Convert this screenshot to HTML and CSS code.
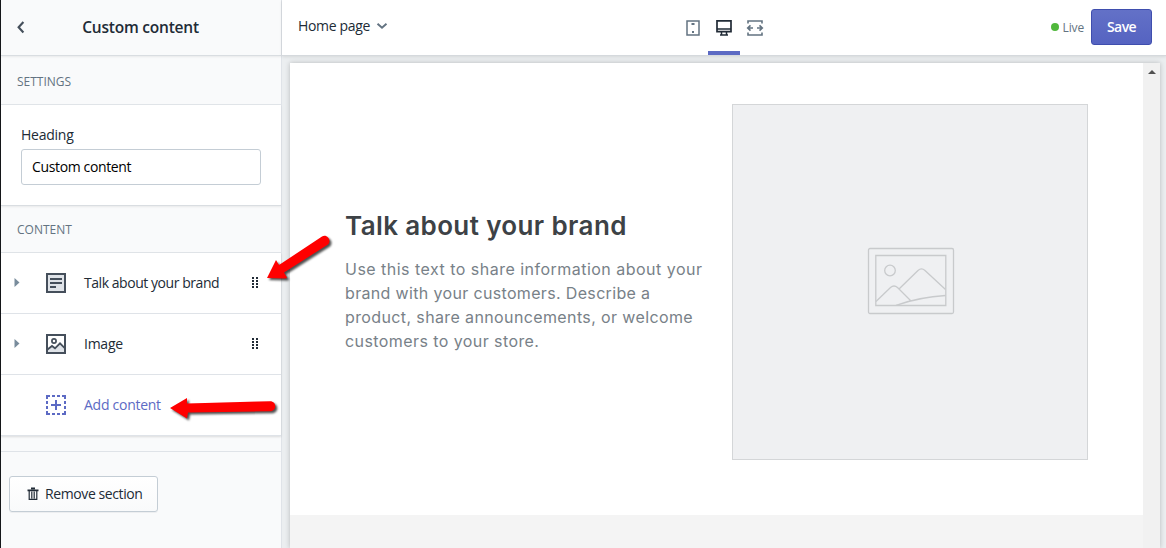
FILE: index.html
```html
<!DOCTYPE html>
<html lang="en">
<head>
<meta charset="utf-8">
<title>Theme editor</title>
<link rel="stylesheet" href="styles.css">
</head>
<body>
<div class="editor">
  <aside class="sidebar">
    <header class="side-head">
      <svg class="back" width="20" height="20" viewBox="0 0 20 20"><path d="M12.4 5 7.6 10.3l4.8 5.2" fill="none" stroke="#454f5b" stroke-width="2.1"/></svg>
      <h1 class="side-title"><span class="t-title">Custom content</span></h1>
    </header>
    <h2 class="group"><span class="t-settings">SETTINGS</span></h2>
    <section class="form">
      <label class="label" for="heading"><span class="t-heading">Heading</span></label>
      <div class="input" id="heading"><span class="t-input">Custom content</span></div>
    </section>
    <h2 class="group group-content"><span class="t-content">CONTENT</span></h2>
    <ul class="blocks">
      <li class="block">
        <svg class="caret" width="6" height="9" viewBox="0 0 6 9"><path d="M.5 0v9L5.5 4.500z" fill="#798c9c"/></svg>
        <svg class="icon" width="20" height="20" viewBox="0 0 20 20"><path d="M1 1h18v18H1z" fill="#dfe3e8" stroke="#454f5b" stroke-width="2"/><path d="M4 6h12M4 10h12M4 14h6" stroke="#454f5b" stroke-width="2"/></svg>
        <span class="name"><span class="t-talk">Talk about your brand</span></span>
        <svg class="grip" width="8" height="11" viewBox="0 0 8 11"><path d="M1 0h2v2H1zM5 0h2v2H5zM1 3h2v2H1zM5 3h2v2H5zM1 6h2v2H1zM5 6h2v2H5zM1 9h2v2H1zM5 9h2v2H5z" fill="#212b36"/></svg>
      </li>
      <li class="block">
        <svg class="caret" width="6" height="9" viewBox="0 0 6 9"><path d="M.5 0v9L5.5 4.500z" fill="#798c9c"/></svg>
        <svg class="icon" width="20" height="20" viewBox="0 0 20 20"><path d="M1 15l5-3 3 2 5-5 5 5v5H1z" fill="#dfe3e8"/><path d="M1 1h18v18H1z" fill="none" stroke="#454f5b" stroke-width="2"/><path d="M1.500 15.500 6 12l3 2.300L14 9.300l4.500 4.500" fill="none" stroke="#454f5b" stroke-width="1.800"/><circle cx="8" cy="7" r="2.100" fill="#fff" stroke="#454f5b" stroke-width="1.700"/></svg>
        <span class="name"><span class="t-image">Image</span></span>
        <svg class="grip" width="8" height="11" viewBox="0 0 8 11"><path d="M1 0h2v2H1zM5 0h2v2H5zM1 3h2v2H1zM5 3h2v2H5zM1 6h2v2H1zM5 6h2v2H5zM1 9h2v2H1zM5 9h2v2H5z" fill="#212b36"/></svg>
      </li>
      <li class="block add">
        <svg class="icon" width="20" height="20" viewBox="0 0 20 20"><path d="M0 4V0h4v2H2v2zM16 0h4v4h-2V2h-2zM20 16v4h-4v-2h2v-2zM4 20H0v-4h2v2h2zM6 0h3v2H6zM11 0h3v2h-3zM6 18h3v2H6zM11 18h3v2h-3zM0 6h2v3H0zM0 11h2v3H0zM18 6h2v3h-2zM18 11h2v3h-2z" fill="#5c6ac4"/><path d="M10 5v10M5 10h10" stroke="#5c6ac4" stroke-width="2"/></svg>
        <span class="name"><span class="t-add">Add content</span></span>
      </li>
    </ul>
    <footer class="side-foot">
      <div class="remove">
        <svg width="12" height="14" viewBox="0 0 12 14"><path d="M.5 3.300h11M4 1.300h4" stroke="#212b36" stroke-width="1.700"/><path d="M2.200 3.500v8.900h7.600V3.500M4.800 4.500v7M7.200 4.500v7" fill="none" stroke="#212b36" stroke-width="1.200"/></svg>
        <span class="t-remove">Remove section</span>
      </div>
    </footer>
  </aside>
  <main class="main">
    <header class="topbar">
      <div class="page"><span class="t-home">Home page</span>
        <svg width="12" height="8" viewBox="0 0 12 8"><path d="m1.500 1.700 4.500 4 4.500-4" fill="none" stroke="#637381" stroke-width="1.900"/></svg>
      </div>
      <nav class="devices">
        <div class="device"><svg width="16" height="18" viewBox="0 0 16 18"><path d="M2 1.900h12v14.200H2z" fill="none" stroke="#637381" stroke-width="1.500"/><path d="M6.500 5h3M7 13h2" stroke="#637381" stroke-width="2"/></svg></div>
        <div class="device active"><svg width="18" height="18" viewBox="0 0 18 18"><path d="M2 1.900h14v10.800H2z" fill="none" stroke="#212b36" stroke-width="1.700"/><path d="M2 10h14M6.500 13v3M11.500 13v3M5 16h8" fill="none" stroke="#212b36" stroke-width="1.500"/></svg></div>
        <div class="device"><svg width="18" height="18" viewBox="0 0 18 18"><path d="M2 4.500V2h14v2.500M2 13.500V16h14v-2.500M2 9h5M16 9h-5M4.500 6.300 1.700 9l2.800 2.700M13.500 6.300 16.300 9l-2.800 2.700" fill="none" stroke="#637381" stroke-width="1.600"/></svg></div>
      </nav>
      <div class="actions">
        <i class="dot"></i><span class="live"><span class="t-live">Live</span></span>
        <div class="save"><span class="t-save">Save</span></div>
      </div>
    </header>
    <div class="stage">
      <div class="preview">
        <div class="canvas">
          <section class="feature">
            <div class="copy">
              <h2 class="brand"><span class="t-brand">Talk about your brand</span></h2>
              <p class="text"><span class="t-l1">Use this text to share information about your</span><br><span class="t-l2">brand with your customers. Describe a</span><br><span class="t-l3">product, share announcements, or welcome</span><br><span class="t-l4">customers to your store.</span></p>
            </div>
            <div class="placeholder">
              <svg width="88" height="68" viewBox="0 0 88 68" fill="none" stroke="#c8cacc" stroke-width="1.300"><rect x="1.500" y="1.500" width="85" height="65" rx="1.500"/><path d="M8.800 8.500h70v50h-70z"/><circle cx="23" cy="23.500" r="5.300"/><path d="M9 54.500 23.500 40.500q3.500-3 7 0L44 54M32 42 51 23.500q3.500-3.200 7 0L78.500 42.500M29 58.300Q53 50 78.500 48.500"/></svg>
            </div>
          </section>
          <div class="after"></div>
        </div>
        <div class="scroll"><svg width="8" height="4" viewBox="0 0 8 4"><path d="M0 4 4 0l4 4z" fill="#505050"/></svg></div>
      </div>
    </div>
  </main>
  <svg class="arrows" width="340" height="190" viewBox="0 230 340 190">
    <g fill="red"><path d="M266 278 275 260l3 5L321 236.500c5-3 10 4 6 8L283 272.500l3 5q0 1-2 1z"/><path d="M169 408 186 398v5.500L269 401.200c7 0 7 10 0 10L187 412.500l-1 6z"/></g>
  </svg>
</div>
</body>
</html>
```
FILE: styles.css
```css
* { box-sizing: border-box; }
body { margin: 0; font: 14px/20px "Open Sans", "Noto Sans", sans-serif; color: #212b36; }
h1, h2, p, ul { margin: 0; padding: 0; font-weight: 400; }
span { white-space: nowrap; }
svg { display: block; flex: none; }
.editor { position: relative; width: 1166px; height: 548px; display: flex; overflow: hidden; background: #ebeef0; }
.sidebar { width: 282px; border-left: 1px solid #15171a; border-right: 1px solid #dfe3e8; background: #f9fafb; display: flex; flex-direction: column; }
.side-head { height: 56px; display: flex; align-items: center; border-bottom: 1px solid #d9dde1; box-shadow: 0 1px 2px #00000012; padding: 0 0 2px 10px; }
.side-title { flex: 1; padding-right: 31px; text-align: center; font-size: 15.5px; font-weight: 600; line-height: 24px; letter-spacing: -.22px; }
.group { height: 49px; padding: 16px 16px 0; border-bottom: 1px solid #e1e5e9; font-size: 12px; font-weight: 500; color: #637381; }
.group-content { height: 47px; padding-top: 14px; }
.form { height: 101px; padding: 20px 20px 0; background: #fff; border-bottom: 1px solid #d9dde1; box-shadow: 0 1px 2px #00000012; }
.input { height: 36px; margin-top: 4px; border: 1px solid #c4cdd5; border-radius: 3px; background: #fff; padding: 7px 10px; color: #000; }
.label { display: block; }
.t-heading { letter-spacing: -.25px; }
.t-input { letter-spacing: -.36px; }
.t-talk { letter-spacing: -.45px; }
.t-image { letter-spacing: -.25px; }
.t-add { letter-spacing: -.27px; }
.t-remove { letter-spacing: -.4px; }
.t-home { letter-spacing: -.33px; }
.t-brand { letter-spacing: .38px; }
.t-l1 { letter-spacing: .48px; }
.t-l2 { letter-spacing: .34px; }
.t-l3 { letter-spacing: .38px; }
.t-l4 { letter-spacing: .42px; }
.blocks { list-style: none; background: #fff; box-shadow: 0 1px 2px #00000020; }
.block { height: 61px; display: flex; align-items: center; border-bottom: 1px solid #dfe3e8; padding: 0 22px 0 12px; }
.caret { margin: -2px 0 0 1px; }
.icon { margin-left: 26px; }
.grip { margin-bottom: 1px; }
.name { flex: 1; margin-left: 18px; }
.add { padding-left: 19px; color: #5c6ac4; }
.side-foot { margin-top: 15px; border-top: 1px solid #dfe3e8; padding: 24px 8px; }
.remove { width: 149px; height: 36px; display: flex; align-items: center; gap: 6px; padding-left: 17px; border: 1px solid #c4cdd5; border-radius: 3px; background: linear-gradient(#fff, #f9fafb); box-shadow: 0 1px 0 #161d250d; }
.main { flex: 1; min-width: 0; display: flex; flex-direction: column; }
.topbar { height: 56px; display: grid; grid-template-columns: 395px 1fr auto; background: #fff; border-bottom: 1px solid #d5d9dd; box-shadow: 0 1px 3px #00000018; }
.page { display: flex; align-items: center; gap: 6px; padding: 0 0 3px 16px; }
.devices { display: flex; }
.device { width: 31px; height: 55px; display: flex; justify-content: center; padding-top: 19px; border-bottom: 4px solid transparent; }
.device:last-child { width: 30px; }
.device.active { width: 32px; border-color: #5c6ac4; }
.actions { display: flex; align-items: center; padding: 0 14px 1px 0; }
.dot { width: 8px; height: 8px; border-radius: 50%; background: #50b83c; }
.live { margin: 1px 7px 0 4px; font-size: 12px; letter-spacing: -.15px; color: #637381; }
.save { width: 61px; height: 36px; border: 1px solid #3f4eae; border-radius: 3px; background: linear-gradient(#6371c7, #5563c1); color: #fff; text-align: center; line-height: 34px; font-weight: 600; letter-spacing: -.6px; }
.stage { flex: 1; padding: 7px 6px 0 8px; }
.preview { height: 485px; display: flex; background: #fff; box-shadow: 0 0 5px #00000038; }
.canvas { flex: 1; display: flex; flex-direction: column; }
.feature { height: 452px; display: grid; grid-template-columns: 387px 356px; padding: 41px 55px 0; }
.copy { padding-top: 104px; font-family: Inter, "Open Sans", sans-serif; }
.brand { font-size: 26px; font-weight: 600; line-height: 36px; color: #3d4246; }
.text { margin-top: 13px; font-size: 16px; line-height: 24px; color: #788188; }
.placeholder { height: 356px; border: 1px solid #d4d6d8; background: #eff0f2; display: grid; place-items: center; padding: 0 0 2px 2px; }
.after { flex: 1; background: #f4f4f4; }
.scroll { width: 17px; background: #f1f1f1; display: flex; justify-content: center; padding-top: 7px; }
.arrows { position: absolute; left: 1px; top: 230px; filter: drop-shadow(2px 2px 1px #000000b0); }
```
